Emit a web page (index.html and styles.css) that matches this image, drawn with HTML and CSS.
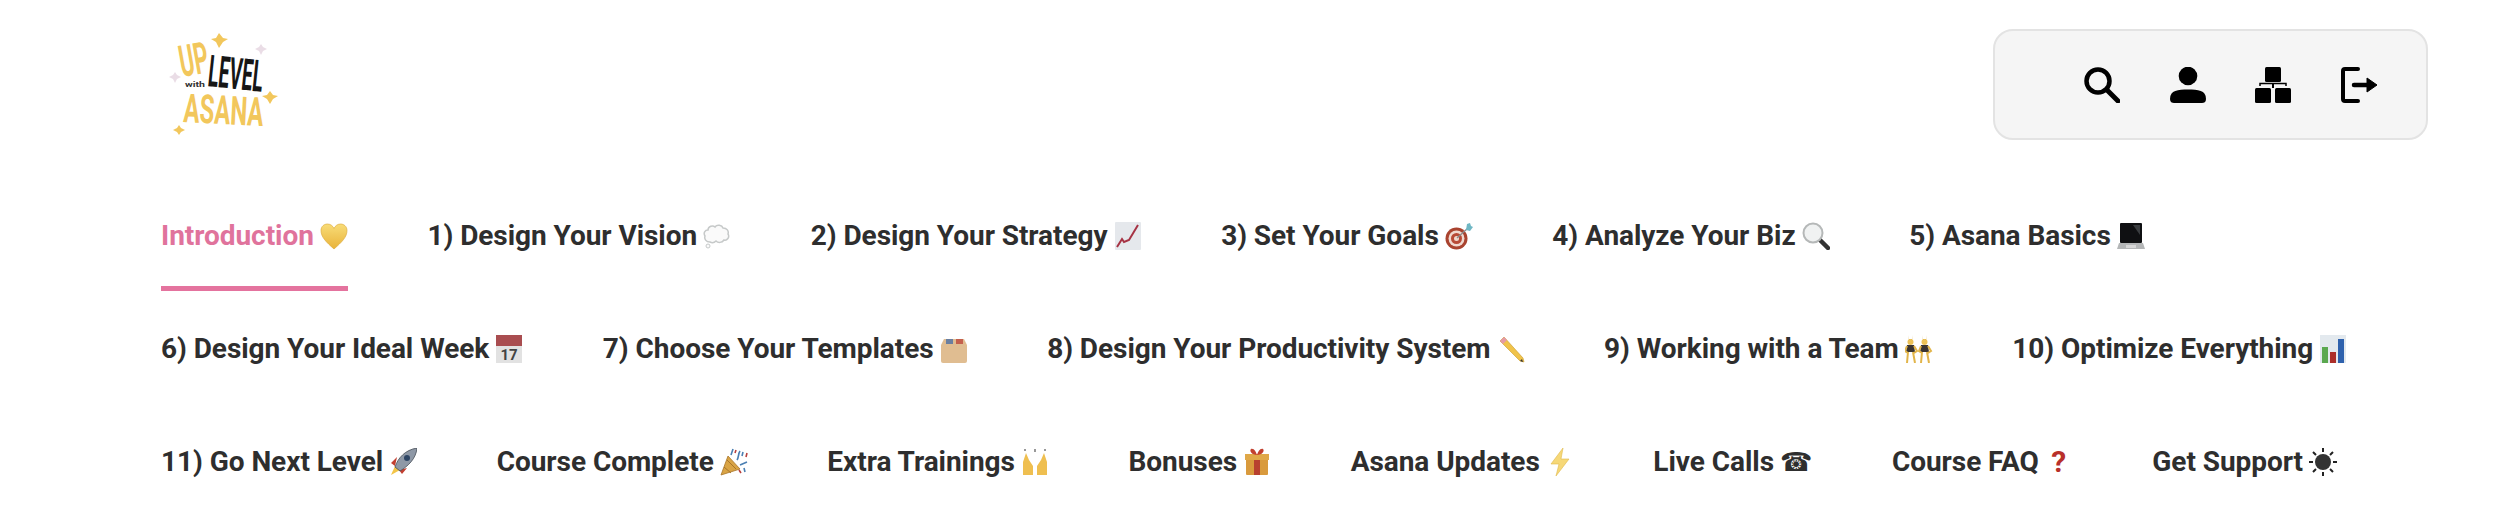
FILE: index.html
```html
<!DOCTYPE html>
<html lang="en">
<head>
<meta charset="utf-8">
<title>Up Level with Asana</title>
<link rel="stylesheet" href="styles.css">
</head>
<body>
<header class="header">
  <a class="logo" href="#" aria-label="Up Level with Asana">
    <svg class="logo-art" viewBox="0 0 115 105" width="115" height="105">
      <g fill="#f2c75c">
        <path d="M57-1l4 5 5 1-5 3-4 6-3-6-5-3 5-1z"/>
        <path d="M108 57l3 4 5 1-5 3-3 5-3-5-5-3 5-1z"/>
        <path d="M17 91l2 3 4 2-4 2-2 3-2-3-4-2 4-2z"/>
      </g>
      <g fill="#eadde6">
        <path d="M99 10l2 3 4 2-4 2-2 4-2-4-4-2 4-2z"/>
        <path d="M13 38l2 3 4 2-4 2-2 4-2-4-4-2 4-2z"/>
      </g>
      <text class="logo-up" transform="translate(20 43) rotate(-10)" textLength="29" lengthAdjust="spacingAndGlyphs">UP</text>
      <text class="logo-with" transform="translate(23 53)" textLength="20" lengthAdjust="spacingAndGlyphs">with</text>
      <text class="logo-level" transform="translate(45 52) rotate(6)" textLength="55" lengthAdjust="spacingAndGlyphs">LEVEL</text>
      <text class="logo-asana" transform="translate(21 88) rotate(3)" textLength="80" lengthAdjust="spacingAndGlyphs">ASANA</text>
    </svg>
  </a>
  <div class="toolbar">
    <a class="tool" href="#" aria-label="Search">
      <svg viewBox="0 0 36 36" width="36" height="36"><circle cx="14" cy="14" r="11.5" fill="none" stroke="#000" stroke-width="4.5"/><path d="M23 23l11 11" stroke="#000" stroke-width="5" stroke-linecap="round"/></svg>
    </a>
    <a class="tool" href="#" aria-label="Account">
      <svg viewBox="0 0 36 36" width="36" height="36"><circle cx="18" cy="9" r="9.3"/><path d="M0 32c0-9 8-9.500 18-9.500S36 23 36 32c0 3-2 4-4 4H4c-2 0-4-1-4-4z"/></svg>
    </a>
    <a class="tool" href="#" aria-label="Courses">
      <svg viewBox="0 0 36 36" width="36" height="36"><rect x="10" y="0" width="16" height="15" rx="1.500"/><rect x="0" y="21" width="16" height="15" rx="1.500"/><rect x="20" y="21" width="16" height="15" rx="1.500"/><path d="M5 19v-2.500h26V19" fill="none" stroke="#000" stroke-width="1.500"/><path d="M18 16v5" stroke="#000" stroke-width="2"/></svg>
    </a>
    <a class="tool" href="#" aria-label="Log out">
      <svg viewBox="0 0 36 36" width="36" height="36"><path d="M17 2H4a2 2 0 0 0-2 2v28a2 2 0 0 0 2 2h13" fill="none" stroke="#000" stroke-width="4" stroke-linecap="round"/><path d="M13 18h15" stroke="#000" stroke-width="4.500" stroke-linecap="round"/><path d="M26 11l10 7-10 7z" stroke="#000" stroke-width="1" stroke-linejoin="round"/></svg>
    </a>
  </div>
</header>
<nav class="tabs">
  <a class="tab tab-active" href="#">Introduction
    <svg class="emoji" viewBox="0 0 28 28"><defs><linearGradient id="gold" x1="0" y1="0" x2="0" y2="1"><stop offset="0" stop-color="#f8dc78"/><stop offset="1" stop-color="#e9b33a"/></linearGradient></defs><path d="M14 27C6 20 1 15 1 8.500 1 4.500 4 2 7.500 2 10.500 2 13 4 14 6.500 15 4 17.500 2 20.500 2 24 2 27 4.500 27 8.500 27 15 22 20 14 27z" fill="url(#gold)" stroke="#d9a432" stroke-width=".6"/></svg>
  </a>
  <a class="tab" href="#">1) Design Your Vision
    <svg class="emoji" viewBox="0 0 28 28"><path d="M7 20c-4 0-6-3-5-6-2-3 0-6 3-6 0-4 5-5 7-3 2-3 7-2 8 1 4 0 6 3 5 6 2 3-1 7-4 6-2 3-6 3-8 1-2 2-4 2-6 1z" fill="#fafafa" stroke="#c6c9c9" stroke-width="1.500"/><circle cx="5" cy="24" r="2" fill="#fafafa" stroke="#c6c9c9"/></svg>
  </a>
  <a class="tab" href="#">2) Design Your Strategy
    <svg class="emoji" viewBox="0 0 28 28"><rect x="1" y="0" width="26" height="28" rx="1" fill="#e5e8ec"/><path d="M3 25l5-8 2 3 5-2 9-15" fill="none" stroke="#a63344" stroke-width="2"/></svg>
  </a>
  <a class="tab" href="#">3) Set Your Goals
    <svg class="emoji" viewBox="0 0 28 28"><circle cx="11.500" cy="16.500" r="11" fill="#a9432f"/><circle cx="11.500" cy="16.500" r="8" fill="#f0d8cf"/><circle cx="11.500" cy="16.500" r="5.500" fill="#b84a36"/><circle cx="11.500" cy="16.500" r="2.500" fill="#f0d8cf"/><path d="M12 16L23 6" stroke="#8b8b8b" stroke-width="1.300"/><path d="M21 8l1-6 3-1 1 3 2 1-3 4z" fill="#6fb7c4"/></svg>
  </a>
  <a class="tab" href="#">4) Analyze Your Biz
    <svg class="emoji" viewBox="0 0 28 28"><path d="M17 17l9 9" stroke="#333" stroke-width="4.500" stroke-linecap="round"/><circle cx="11" cy="11" r="9.500" fill="#f0f2f2" stroke="#b5b8b8" stroke-width="2"/></svg>
  </a>
  <a class="tab" href="#">5) Asana Basics
    <svg class="emoji" viewBox="0 0 28 28"><rect x="3" y="1" width="22" height="20" rx="1" fill="#0f1012"/><path d="M16 3h7v10z" fill="#3a3d40"/><path d="M2 21h24l2 6H0z" fill="#b4b6b7"/><rect x="9" y="23" width="10" height="3" fill="#d6d6d6"/></svg>
  </a>
  <a class="tab" href="#">6) Design Your Ideal Week
    <svg class="emoji" viewBox="0 0 28 28"><rect x="1" y="0" width="26" height="28" fill="#e2e2e2"/><rect x="1" y="0" width="26" height="11" fill="#a94d50"/><text class="emoji-date" x="14" y="25" text-anchor="middle">17</text></svg>
  </a>
  <a class="tab" href="#">7) Choose Your Templates
    <svg class="emoji" viewBox="0 0 28 28"><path d="M4 4h20l3 6v16a2 2 0 0 1-2 2H3a2 2 0 0 1-2-2V10z" fill="#e0bd91"/><rect x="6" y="4" width="7" height="5" fill="#6a7fa0"/><rect x="16" y="4" width="7" height="5" fill="#c45f4c"/></svg>
  </a>
  <a class="tab" href="#">8) Design Your Productivity System
    <svg class="emoji" viewBox="0 0 28 28"><path d="M3 6l4-4 19 21 1 4-4-1z" fill="#f0c34a" stroke="#c79a2d" stroke-width=".6"/><path d="M3 6l4-4 3 3-4 4z" fill="#e59aa5"/><path d="M26 27l-3-1 2-2z" fill="#333"/></svg>
  </a>
  <a class="tab" href="#">9) Working with a Team
    <svg class="emoji" viewBox="0 0 28 28"><path d="M3 0l1 5h3l1-5-1 4H4z" fill="#c99d34"/><circle cx="5.500" cy="7" r="3" fill="#edc257"/><path d="M2 10h7l1 7H1z" fill="#3b3532"/><path d="M3 17l-1 11M8 17l2 11M2 11L0 16l3 2M9 11l3 5-3 2" stroke="#e2b54a" stroke-width="2" fill="none"/><g transform="translate(14 0)"><path d="M3 0l1 5h3l1-5-1 4H4z" fill="#c99d34"/><circle cx="5.500" cy="7" r="3" fill="#edc257"/><path d="M2 10h7l1 7H1z" fill="#3b3532"/><path d="M3 17l-1 11M8 17l2 11M2 11L0 16l3 2M9 11l3 5-3 2" stroke="#e2b54a" stroke-width="2" fill="none"/></g></svg>
  </a>
  <a class="tab" href="#">10) Optimize Everything
    <svg class="emoji" viewBox="0 0 28 28"><rect x="1" y="0" width="26" height="28" fill="#e3e9ee"/><rect x="3" y="12" width="6" height="16" fill="#5aa84f"/><rect x="11" y="17" width="6" height="11" fill="#ac2f2a"/><rect x="19" y="4" width="6" height="24" fill="#2f62ad"/></svg>
  </a>
  <a class="tab" href="#">11) Go Next Level
    <svg class="emoji" viewBox="0 0 28 28"><path d="M2 27l4-9 5 4z" fill="#f3c548"/><path d="M2 15l6-6-2 9zM13 26l5-6-8 2z" fill="#c23f30"/><path d="M6 19C9 10 16 2 28 0c-1 11-9 18-17 23z" fill="#8e98a6" stroke="#454c56" stroke-width=".8"/><circle cx="18" cy="10" r="3" fill="#2e4665"/></svg>
  </a>
  <a class="tab" href="#">Course Complete
    <svg class="emoji" viewBox="0 0 28 28"><path d="M1 27L8 8l12 13z" fill="#d9a445" stroke="#a8752a" stroke-width=".8"/><path d="M4 19l7 6M7 12l9 9" stroke="#a8752a" stroke-width="1"/><path d="M11 7l2-6M17 12c2-3 1-6 3-9M20 17l7-3M22 8l1-4M24 20l1 4" stroke="#4a7fb2" stroke-width="1.600" fill="none"/><path d="M15 5l1-3M26 9l1-4M19 22l2 3" stroke="#b8403d" stroke-width="1.600"/></svg>
  </a>
  <a class="tab" href="#">Extra Trainings
    <svg class="emoji" viewBox="0 0 28 28"><path d="M2 27V14l3-9 3 7 4 6v9zM26 27V14l-3-9-3 7-4 6v9z" fill="#efbf50"/><path d="M4 1v2M14 1v3M24 1v2" stroke="#555" stroke-width="1.200"/></svg>
  </a>
  <a class="tab" href="#">Bonuses
    <svg class="emoji" viewBox="0 0 28 28"><rect x="3" y="7" width="22" height="20" rx="1" fill="#d99a3d"/><rect x="11" y="7" width="6" height="20" fill="#b8402f"/><rect x="2" y="6" width="24" height="6" fill="#e0a848"/><path d="M14 7C9 7 6 3 8 1c3-1 5 3 6 6 1-3 3-7 6-6 2 2-1 6-6 6z" fill="#c2402f"/></svg>
  </a>
  <a class="tab" href="#">Asana Updates
    <svg class="emoji" viewBox="0 0 28 28"><path d="M17 0L5 16h8l-3 12 13-17h-8z" fill="#f6d878" stroke="#e0b848" stroke-width=".6"/></svg>
  </a>
  <a class="tab" href="#">Live Calls <span class="glyph">☎</span></a>
  <a class="tab" href="#">Course FAQ <span class="question">?</span></a>
  <a class="tab" href="#">Get Support
    <svg class="emoji" viewBox="0 0 28 28"><circle cx="14" cy="14" r="8" fill="#333"/><path d="M14 0v4M14 24v4M0 14h4M24 14h4M4 4l3 3M21 21l3 3M24 4l-3 3M7 21l-3 3" stroke="#222" stroke-width="2"/></svg>
  </a>
</nav>
</body>
</html>
```
FILE: styles.css
```css
* {
  box-sizing: border-box;
}

html,
body {
  margin: 0;
  background: #fff;
}

body {
  height: 531px;
  overflow: hidden;
  font-family: Roboto, "Liberation Sans", sans-serif;
}

a {
  color: inherit;
  text-decoration: none;
}

.header {
  display: flex;
  justify-content: space-between;
  align-items: flex-start;
  padding: 29px 72px 0 162px;
}

.logo {
  display: block;
  padding-top: 5px;
}

.logo-art {
  display: block;
  overflow: visible;
}

.logo-up,
.logo-asana {
  fill: #f2c75c;
  font-family: "Roboto", sans-serif;
  font-weight: 700;
}

.logo-up {
  font-size: 44px;
}

.logo-asana {
  font-size: 40px;
}

.logo-level {
  fill: #161616;
  font-family: "Roboto", sans-serif;
  font-weight: 700;
  font-size: 44px;
}

.logo-with {
  fill: #333;
  font-family: "Roboto", sans-serif;
  font-size: 8px;
  font-weight: 700;
}

.toolbar {
  display: flex;
  gap: 49.7px;
  align-items: center;
  justify-content: flex-end;
  width: 435px;
  height: 111px;
  padding: 0 49px 0 0;
  background: #f5f5f5;
  border: 2px solid #e3e3e3;
  border-radius: 20px;
}

.tool {
  display: block;
  width: 36px;
  height: 36px;
}

.tool svg {
  display: block;
}

.tabs {
  display: flex;
  flex-wrap: wrap;
  column-gap: 79.6px;
  row-gap: 38px;
  padding: 76px 0 0 161px;
}

.tab {
  display: inline-flex;
  align-items: center;
  gap: 6px;
  height: 75px;
  padding-bottom: 31px;
  border-bottom: 5px solid transparent;
  color: #2e2e2e;
  font-size: 28px;
  font-weight: 700;
  letter-spacing: -0.05px;
  white-space: nowrap;
}

.tab-active {
  color: #e0739c;
  border-bottom-color: #e4739e;
}

.emoji {
  display: block;
  flex: none;
  width: 28px;
  height: 28px;
}

.emoji-date {
  fill: #444;
  font-family: "Roboto", sans-serif;
  font-size: 15px;
}

.question {
  width: 28px;
  color: #b8302a;
  font-size: 30px;
  line-height: 1;
  text-align: center;
}

.glyph {
  font-family: "DejaVu Sans", sans-serif;
  font-size: 26px;
  font-weight: 400;
  color: #2e2e2e;
  line-height: 1;
}
```
